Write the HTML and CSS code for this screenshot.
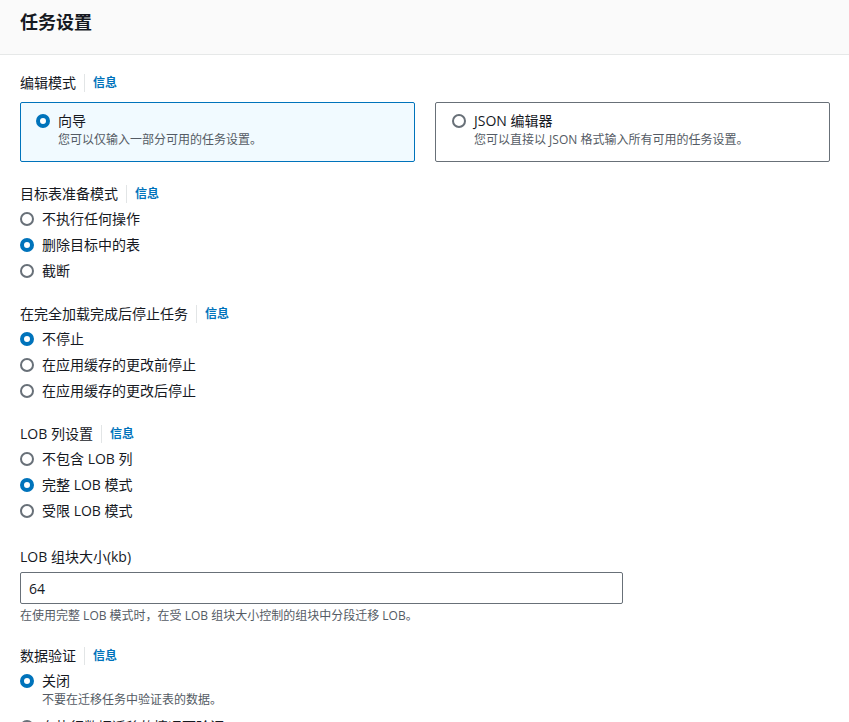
FILE: index.html
```html
<!DOCTYPE html>
<html lang="zh-CN">
<head>
<meta charset="utf-8">
<title>任务设置</title>
<link rel="stylesheet" href="styles.css">
</head>
<body>
<div class="panel">
  <div class="header"><h2 class="title">任务设置</h2></div>
  <div class="content">
    <div class="field field-tiles">
      <div class="label"><span>编辑模式</span><span class="divider"></span><a class="info">信息</a></div>
      <div class="tiles">
        <div class="tile selected">
          <span class="radio checked"></span>
          <div class="tile-text">
            <div class="tile-title">向导</div>
            <div class="desc">您可以仅输入一部分可用的任务设置。</div>
          </div>
        </div>
        <div class="tile">
          <span class="radio"></span>
          <div class="tile-text">
            <div class="tile-title">JSON 编辑器</div>
            <div class="desc">您可以直接以 JSON 格式输入所有可用的任务设置。</div>
          </div>
        </div>
      </div>
    </div>

    <div class="field">
      <div class="label"><span>目标表准备模式</span><span class="divider"></span><a class="info">信息</a></div>
      <div class="options">
        <div class="option"><span class="radio"></span><span>不执行任何操作</span></div>
        <div class="option"><span class="radio checked"></span><span>删除目标中的表</span></div>
        <div class="option"><span class="radio"></span><span>截断</span></div>
      </div>
    </div>

    <div class="field">
      <div class="label"><span>在完全加载完成后停止任务</span><span class="divider"></span><a class="info">信息</a></div>
      <div class="options">
        <div class="option"><span class="radio checked"></span><span>不停止</span></div>
        <div class="option"><span class="radio"></span><span>在应用缓存的更改前停止</span></div>
        <div class="option"><span class="radio"></span><span>在应用缓存的更改后停止</span></div>
      </div>
    </div>

    <div class="field">
      <div class="label"><span>LOB 列设置</span><span class="divider"></span><a class="info">信息</a></div>
      <div class="options">
        <div class="option"><span class="radio"></span><span>不包含 LOB 列</span></div>
        <div class="option"><span class="radio checked"></span><span>完整 LOB 模式</span></div>
        <div class="option"><span class="radio"></span><span>受限 LOB 模式</span></div>
      </div>
    </div>

    <div class="field field-input">
      <div class="label"><span>LOB 组块大小(kb)</span></div>
      <input class="text-input" type="text" value="64">
      <div class="hint">在使用完整 LOB 模式时，在受 LOB 组块大小控制的组块中分段迁移 LOB。</div>
    </div>

    <div class="field">
      <div class="label"><span>数据验证</span><span class="divider"></span><a class="info">信息</a></div>
      <div class="options">
        <div class="option option-desc">
          <span class="radio checked"></span>
          <div>
            <div>关闭</div>
            <div class="desc">不要在迁移任务中验证表的数据。</div>
          </div>
        </div>
        <div class="option option-desc">
          <span class="radio"></span>
          <div>
            <div>在执行数据迁移的情况下验证</div>
            <div class="desc">在迁移任务中验证表的数据。</div>
          </div>
        </div>
      </div>
    </div>
  </div>
</div>
</body>
</html>
```

FILE: styles.css
```css
* { box-sizing: border-box; }
html, body { margin: 0; padding: 0; background: #ffffff; }
body {
  font-family: "Open Sans", "Noto Sans CJK SC", sans-serif;
  font-size: 14px;
  line-height: 22px;
  color: #16191f;
  overflow: hidden;
}
.header {
  background: #fafafa;
  border-bottom: 1px solid #e6e8e8;
  height: 55px;
  padding: 10px 20px 0;
}
.title {
  margin: 0;
  font-size: 18px;
  line-height: 24px;
  font-weight: 700;
}
.content {
  padding: 17px 20px 0;
  width: 850px;
}
.field { margin-bottom: 19px; width: 810px; }
.field-tiles { margin-bottom: 21px; }
.label {
  display: flex;
  align-items: center;
  height: 22px;
}
.divider {
  display: inline-block;
  width: 1px;
  height: 18px;
  background: #e2e5e6;
  margin: 0 8px;
}
.info {
  font-size: 12px;
  font-weight: 700;
  color: #0073bb;
}
.tiles {
  display: grid;
  grid-template-columns: 1fr 1fr;
  gap: 20px;
  margin-top: 8px;
}
.tile {
  display: flex;
  align-items: flex-start;
  gap: 8px;
  height: 60px;
  border: 1px solid #687078;
  border-radius: 2px;
  padding: 7px 16px 0 16px;
}
.tile.selected {
  border-color: #0073bb;
  background: #f1faff;
  padding-left: 15px;
}
.tile .radio { margin-top: 4px; }
.tile-title { line-height: 22px; }
.desc {
  font-size: 12px;
  line-height: 16px;
  color: #545b64;
}
.radio {
  flex: none;
  display: inline-block;
  width: 14px;
  height: 14px;
  border-radius: 50%;
  border: 2px solid #687078;
  background: #fff;
}
.radio.checked {
  border: 4px solid #0073bb;
}
.options { padding-top: 1px; }
.option {
  display: flex;
  align-items: center;
  gap: 8px;
  height: 26px;
}
.option-desc {
  align-items: flex-start;
  height: auto;
  padding-top: 2px;
  margin-bottom: 6px;
}
.option-desc .radio { margin-top: 4px; }
.field-input { margin-top: 22px; margin-bottom: 21px; }
.field-input .label { margin-bottom: 4px; }
.text-input {
  display: block;
  width: 603px;
  height: 32px;
  border: 1px solid #687078;
  border-radius: 2px;
  padding: 0 8px;
  font-family: "Open Sans", "Noto Sans CJK SC", sans-serif;
  font-size: 14px;
  color: #16191f;
  outline: none;
}
.hint {
  margin-top: 4px;
  font-size: 12px;
  line-height: 16px;
  color: #545b64;
}
```
